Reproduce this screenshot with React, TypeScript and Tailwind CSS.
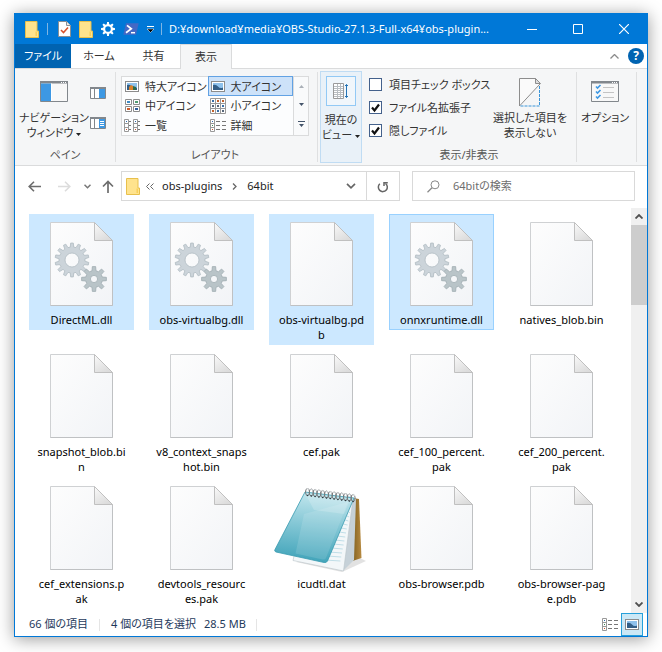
import React from 'react';

interface FileItem {
  name: string;
  kind: 'dll' | 'blank' | 'notepad';
  selected?: boolean;
  focused?: boolean;
}

const FILES: FileItem[] = [
  { name: 'DirectML.dll', kind: 'dll', selected: true },
  { name: 'obs-virtualbg.dll', kind: 'dll', selected: true },
  { name: 'obs-virtualbg.pd\nb', kind: 'blank', selected: true },
  { name: 'onnxruntime.dll', kind: 'dll', selected: true, focused: true },
  { name: 'natives_blob.bin', kind: 'blank' },
  { name: 'snapshot_blob.bi\nn', kind: 'blank' },
  { name: 'v8_context_snaps\nhot.bin', kind: 'blank' },
  { name: 'cef.pak', kind: 'blank' },
  { name: 'cef_100_percent.\npak', kind: 'blank' },
  { name: 'cef_200_percent.\npak', kind: 'blank' },
  { name: 'cef_extensions.p\nak', kind: 'blank' },
  { name: 'devtools_resourc\nes.pak', kind: 'blank' },
  { name: 'icudtl.dat', kind: 'notepad' },
  { name: 'obs-browser.pdb', kind: 'blank' },
  { name: 'obs-browser-pag\ne.pdb', kind: 'blank' },
];

function gearPath(cx: number, cy: number, outer: number, root: number, hole: number, teeth: number) {
  const step = (Math.PI * 2) / teeth;
  const points: string[] = [];
  for (let i = 0; i < teeth; i++) {
    const a = i * step - Math.PI / 2;
    const corners: [number, number][] = [
      [root, -0.3],
      [outer, -0.17],
      [outer, 0.17],
      [root, 0.3],
    ];
    corners.forEach(([r, t]) => {
      points.push(`${(cx + r * Math.cos(a + t * step)).toFixed(2)} ${(cy + r * Math.sin(a + t * step)).toFixed(2)}`);
    });
  }
  return `M${points.join('L')}ZM${cx - hole} ${cy}a${hole} ${hole} 0 1 0 ${hole * 2} 0a${hole} ${hole} 0 1 0 ${-hole * 2} 0Z`;
}

const BIG_GEAR = gearPath(22, 38, 17, 13, 7, 14);
const SMALL_GEAR = gearPath(44, 57, 12.5, 8.5, 3.6, 8);
const TITLE_GEAR = gearPath(7, 7, 7, 5, 2.8, 8);

const Folder = () => (
  <svg width="14" height="17" viewBox="0 0 14 17" className="shrink-0">
    <path d="M0.5 0.5h11.5v9.5h1.5v6.5H0.5z" fill="#ffe38d" stroke="#e8c04c" />
    <path d="M12 10v5h-1.5v-4.5h1.5z" fill="#f8cf5a" />
  </svg>
);

const PageCheck = () => (
  <svg width="13" height="16" viewBox="0 0 13 16" className="shrink-0">
    <path d="M0.5 0.5h8l4 4v11h-12z" fill="#fff" stroke="#8a8f94" />
    <path d="M8.5 0.5v4h4" fill="#e8e8e8" stroke="#8a8f94" />
    <path d="M3 9l2.5 2.5L10 6.5" fill="none" stroke="#d9532c" strokeWidth="1.6" />
  </svg>
);

const TitleGear = () => (
  <svg width="14" height="14" viewBox="0 0 14 14" className="shrink-0">
    <path d={TITLE_GEAR} fill="#fff" fillRule="evenodd" />
  </svg>
);

const Shell = () => (
  <svg width="16" height="12" viewBox="0 0 16 12" className="shrink-0">
    <path d="M3 0.3h12.7L13 11.7H0.3z" fill="#4468c4" />
    <path d="M4 2.3l4.3 3.5L3 9.7" fill="none" stroke="#fff" strokeWidth="1.7" />
    <path d="M8 9.7h4" stroke="#fff" strokeWidth="1.5" />
  </svg>
);

const PageIcon = ({ gears }: { gears?: boolean }) => (
  <svg width="63" height="84" viewBox="0 0 63 84">
    <defs>
      <linearGradient id="sheet" x1="0" y1="0" x2="1" y2="1">
        <stop offset="0" stopColor="#fdfdfd" />
        <stop offset="1" stopColor="#f2f4f7" />
      </linearGradient>
      <linearGradient id="fold" x1="0" y1="0" x2="0.6" y2="1">
        <stop offset="0" stopColor="#fafafa" />
        <stop offset="1" stopColor="#dcdcdc" />
      </linearGradient>
    </defs>
    <path d="M0.5 0.5h44l18 18v65h-62z" fill="url(#sheet)" stroke="#cfd1d3" />
    <path d="M62.5 18.5v65h-62" fill="none" stroke="#bfc1c3" />
    <path d="M44.5 0.5v18h18z" fill="url(#fold)" stroke="#c0c0c0" />
    {gears && (
      <g fillRule="evenodd" strokeWidth="0.8">
        <path d={BIG_GEAR} fill="#ccd4da" stroke="#b0bbc2" />
        <path d={SMALL_GEAR} fill="#b9c4c8" stroke="#a0acb1" />
      </g>
    )}
  </svg>
);

const NotepadIcon = () => (
  <svg width="96" height="88" viewBox="0 0 96 88" className="-mb-1">
    <defs>
      <linearGradient id="cover" x1="0.5" y1="0" x2="0.4" y2="1">
        <stop offset="0" stopColor="#c4e7ee" />
        <stop offset="0.45" stopColor="#86c8d6" />
        <stop offset="1" stopColor="#3fa3b9" />
      </linearGradient>
      <linearGradient id="board" x1="0" y1="0" x2="1" y2="0">
        <stop offset="0" stopColor="#80601f" />
        <stop offset="1" stopColor="#b88b42" />
      </linearGradient>
    </defs>
    <path d="M22 76l46 10 24-11-8-4z" fill="#d5d5d5" opacity="0.7" />
    <path d="M79 12l6 1 2.5 59-9 3z" fill="url(#board)" />
    <path d="M74 10l8 3-2 61-11 11z" fill="#c6d1d8" />
    <path d="M34 7l45 6-9.5 72L19 74.5z" fill="#f3f7f9" stroke="#b8c2c8" strokeWidth="0.6" />
    <g stroke="#a9d3e0" strokeWidth="0.7">
      {[0, 1, 2, 3, 4, 5, 6, 7, 8, 9, 10, 11, 12].map((i) => (
        <path key={i} d={`M${75 - i * 2} ${26 + i * 4}l${1 + i * 1.2} 1`} />
      ))}
    </g>
    <path d="M31 6l49 6-26.5 63q-1 2-3.5 1.5L2 66q-2-0.6-1-2.5z" fill="url(#cover)" stroke="#389ab0" strokeWidth="0.8" />
    <path d="M30 28l44-12-22 56q-1 2-3.5 1.5l-27-6z" fill="#fff" opacity="0.12" />
    <path d="M32 9l44 5-6 14-30-4z" fill="#fff" opacity="0.18" />
    <g fill="none" strokeWidth="1">
      {[0, 1, 2, 3, 4, 5, 6, 7, 8, 9, 10, 11, 12].map((i) => (
        <g key={i}>
          <ellipse cx={33.5 + i * 3.8} cy={6 + i * 0.5} rx="2" ry="3.5" stroke="#77797b" />
          <path d={`M${32.5 + i * 3.8} ${3 + i * 0.5}q2-1.5 3 1.5`} stroke="#d8dcde" />
          <circle cx={33.5 + i * 3.8} cy={9.5 + i * 0.5} r="0.8" fill="#2b3a40" stroke="none" />
        </g>
      ))}
    </g>
  </svg>
);

const Picture = () => (
  <g>
    <rect x="0.5" y="0.5" width="13" height="10" fill="#fff" stroke="#8c8c8c" />
    <path d="M2 2h10v7H2z" fill="#8ec1ec" />
    <path d="M2 4q3-1 5 1.5t5 1V9H2z" fill="#335e86" />
  </g>
);

const LargeIcon = () => (
  <svg width="14" height="11" viewBox="0 0 14 11" className="shrink-0">
    <Picture />
  </svg>
);

const ExtraLargeIcon = () => (
  <svg width="14" height="11" viewBox="0 0 14 11" className="shrink-0">
    <Picture />
    <path d="M4 9V6l2-2 2 1v4z" fill="#db812a" />
    <path d="M8 9V5l3 1v3z" fill="#2d6b4b" />
  </svg>
);

const MediumIcon = () => (
  <svg width="15" height="13" viewBox="0 0 15 13" className="shrink-0">
    <path d="M0.5 0.5h6v5h-6zM8.5 0.5h6v5h-6zM0.5 7.5h6v5h-6zM8.5 7.5h6v5h-6z" fill="#fff" stroke="#8c8c8c" />
    <path d="M2 2h3v2H2z" fill="#3f8ac4" />
    <path d="M10 2h3v2h-3z" fill="#4f9d72" />
    <path d="M2 9h3v2H2z" fill="#ce5b2b" />
    <path d="M10 9h3v2h-3z" fill="#2d5d9c" />
  </svg>
);

const SmallIcon = () => (
  <svg width="16" height="16" viewBox="0 0 16 16" className="shrink-0">
    <path d="M0.5 0.5h15v15h-15zM5.5 0.5v15M10.5 0.5v15M0.5 5.5h15M0.5 10.5h15" fill="#fff" stroke="#999" />
    <path d="M2 2h2v2H2zM12 7h2v2h-2zM7 12h2v2H7z" fill="#3a6ea5" />
    <path d="M7 2h2v2H7zM2 12h2v2H2zM12 2h2v2h-2z" fill="#c0602b" />
    <path d="M2 7h2v2H2zM7 7h2v2H7zM12 12h2v2h-2z" fill="#56667a" />
  </svg>
);

const ListIcon = () => (
  <svg width="16" height="13" viewBox="0 0 16 13" className="shrink-0">
    <path d="M0.5 0.5h4v12h-4zM9.5 0.5h4v12h-4zM0.5 4.5h4M0.5 8.5h4M9.5 4.5h4M9.5 8.5h4" fill="#fff" stroke="#999" />
    <path d="M2 2h1v1H2zM11 2h1v1h-1z" fill="#2f6db0" />
    <path d="M2 10h1v1H2zM11 10h1v1h-1z" fill="#c9502b" />
    <path d="M5 2.5h2M5 6.5h2M5 10.5h2M14 2.5h2M14 6.5h2M14 10.5h2" stroke="#777" />
  </svg>
);

const DetailsIcon = () => (
  <svg width="16" height="13" viewBox="0 0 16 13" className="shrink-0">
    <path d="M0.5 0.5h4v12h-4zM0.5 4.5h4M0.5 8.5h4" fill="#fff" stroke="#999" />
    <path d="M2 2h1v1H2z" fill="#2f6db0" />
    <path d="M2 6h1v1H2z" fill="#3c8b52" />
    <path d="M2 10h1v1H2z" fill="#c9502b" />
    <path d="M6 2.5h4M12 2.5h4M6 6.5h4M12 6.5h4M6 10.5h4M12 10.5h4" stroke="#777" />
  </svg>
);

const PaneFrame = () => (
  <g>
    <path d="M0.5 0.5h27v20h-27z" fill="#f8f8f8" stroke="#82878c" />
    <path d="M0 0h28v2.5H0z" fill="#82878c" />
    <path d="M21 1h1v1h-1zM23 1h1v1h-1zM25 1h1v1h-1z" fill="#fff" />
  </g>
);

const NavPaneIcon = () => (
  <svg width="28" height="21" viewBox="0 0 28 21">
    <PaneFrame />
    <path d="M1 2.5h10V20H1z" fill="#3d98e3" />
    <path d="M11 2.5h1V20h-1z" fill="#fff" />
  </svg>
);

const PreviewPaneIcon = ({ lines }: { lines?: boolean }) => (
  <svg width="16" height="12" viewBox="0 0 16 12">
    <path d="M0.5 0.5h15v11h-15z" fill="#fff" stroke="#82878c" />
    <path d="M0 0h16v2H0z" fill="#82878c" />
    <path d="M4.5 2v9" stroke="#82878c" />
    <path d="M9 2h6v9H9z" fill="#3d98e3" />
    {lines && <path d="M10 4.5h4M10 6.5h4M10 8.5h4" stroke="#fff" />}
  </svg>
);

const Caret = () => (
  <svg width="5" height="3" viewBox="0 0 5 3" className="ml-[3px] inline-block align-middle">
    <path d="M0 0h5L2.5 3z" fill="#222" />
  </svg>
);

const SortIcon = () => (
  <svg width="16" height="16" viewBox="0 0 16 16">
    <path d="M0.5 0.5h10v15h-10z" fill="#fff" stroke="#9a9a9a" />
    <path d="M1 3.5h9M1 5.5h9M1 7.5h9M1 9.5h9M1 11.5h9M1 13.5h9M4.5 1v14M7.5 1v14" stroke="#b9bec2" />
    <path d="M13.5 1.5v13M12 3l1.5-1.5L15 3M12 13l1.5 1.5L15 13" fill="none" stroke="#2473b5" />
  </svg>
);

const HideIcon = () => (
  <svg width="22" height="29" viewBox="0 0 22 29">
    <path d="M0.5 0.5h16l4.5 5.5L0.5 28z" fill="#fafafa" stroke="#8d8d8d" />
    <path d="M16.5 0.5v5h5z" fill="#ddd" stroke="#8d8d8d" />
    <path d="M20.5 8v20H1" fill="none" stroke="#3a95d8" strokeDasharray="3 1" />
  </svg>
);

const OptionsIcon = () => (
  <svg width="28" height="21" viewBox="0 0 28 21">
    <PaneFrame />
    <path d="M5 5.5l1.5 1.5L9.5 4M5 10.5L6.5 12l3-3M5 15.5L6.5 17l3-3" fill="none" stroke="#3d98e3" strokeWidth="1.6" />
    <path d="M12 6.5h11M12 11.5h11M12 16.5h11" stroke="#c4c4c4" />
  </svg>
);

const VIEWS = [
  { label: '特大アイコン', Icon: ExtraLargeIcon },
  { label: '大アイコン', Icon: LargeIcon, active: true },
  { label: '中アイコン', Icon: MediumIcon },
  { label: '小アイコン', Icon: SmallIcon },
  { label: '一覧', Icon: ListIcon },
  { label: '詳細', Icon: DetailsIcon },
];

const CHECKS = [
  { id: 'item-checks', label: '項目チェック ボックス', checked: false },
  { id: 'extensions', label: 'ファイル名拡張子', checked: true },
  { id: 'hidden-files', label: '隠しファイル', checked: true },
];

const TitleBar = () => (
  <header className="flex h-[30px] items-center bg-[#0078d7] pl-[10px] text-white">
    <Folder />
    <span className="mx-[8px] h-3 w-px bg-[#7fb5e3]" />
    <div className="ml-[2px] flex items-center gap-[8px]">
      <PageCheck />
      <Folder />
      <TitleGear />
      <Shell />
      <button type="button" aria-label="Customize toolbar">
        <svg width="7" height="7" viewBox="0 0 7 7">
          <path d="M0 0.5h7" stroke="#fff" />
          <path d="M0 3h7L3.5 6.5z" fill="#000" stroke="#fff" strokeWidth="0.5" />
        </svg>
      </button>
    </div>
    <span className="mx-[7px] h-3 w-px bg-[#7fb5e3]" />
    <h1 className="min-w-0 flex-1 truncate">D:¥download¥media¥OBS-Studio-27.1.3-Full-x64¥obs-plugin...</h1>
    <div className="flex h-full shrink-0">
      <button type="button" aria-label="Minimize" className="flex w-[46px] items-center justify-center">
        <svg width="10" height="10" viewBox="0 0 10 10"><path d="M0 5.5h10" stroke="#fff" /></svg>
      </button>
      <button type="button" aria-label="Maximize" className="flex w-[46px] items-center justify-center">
        <svg width="10" height="10" viewBox="0 0 10 10"><path d="M0.5 0.5h9v9h-9z" fill="none" stroke="#fff" /></svg>
      </button>
      <button type="button" aria-label="Close" className="flex w-[46px] items-center justify-center">
        <svg width="10" height="10" viewBox="0 0 10 10"><path d="M0 0l10 10M10 0L0 10" stroke="#fff" strokeWidth="1.2" /></svg>
      </button>
    </div>
  </header>
);

const Tabs = () => (
  <nav className="flex h-[25px] border-b border-[#dadbdc] bg-white text-[#333]">
    <button type="button" className="w-[56px] bg-[#0063b1] text-white">ファイル</button>
    <button type="button" className="w-[56px]">ホーム</button>
    <button type="button" className="w-[53px]">共有</button>
    <button type="button" className="-mb-px w-[52px] border-x border-t border-[#dadbdc] bg-[#f5f6f7]">表示</button>
    <div className="ml-auto flex items-center gap-[9px] pr-[3px]">
      <button type="button" aria-label="Collapse ribbon">
        <svg width="9" height="5" viewBox="0 0 9 5"><path d="M0.5 4.5l4-4 4 4" fill="none" stroke="#8a8a8a" strokeWidth="1.3" /></svg>
      </button>
      <button type="button" aria-label="Help" className="flex h-4 w-4 items-center justify-center rounded-full bg-[#0063b1] text-xs font-bold text-white">
        ?
      </button>
    </div>
  </nav>
);

const GroupLabel = ({ children }: { children: React.ReactNode }) => (
  <div className="mt-auto text-center text-[#555]">{children}</div>
);

const Ribbon = () => (
  <section className="flex h-[97px] border-b border-[#dadbdc] bg-[#f5f6f7] py-[2px] leading-[15px] text-[#333]">
    <div className="my-px flex w-[101px] shrink-0 flex-col border-r border-[#dfe0e1]">
      <div className="flex pl-[3px]">
        <button type="button" className="flex w-[72px] flex-col items-center gap-[8px] pt-[9px]">
          <NavPaneIcon />
          <span className="whitespace-nowrap">
            ナビゲーション<br />ウィンドウ<Caret />
          </span>
        </button>
        <div className="flex flex-col gap-[18px] pt-[15px]">
          <button type="button" aria-label="Preview pane"><PreviewPaneIcon /></button>
          <button type="button" aria-label="Details pane"><PreviewPaneIcon lines /></button>
        </div>
      </div>
      <GroupLabel>ペイン</GroupLabel>
    </div>

    <div className="my-px flex w-[202px] shrink-0 flex-col border-r border-[#dfe0e1] pr-[8px] pl-[5px]">
      <div className="mt-[4px] flex h-[60px] border border-[#dadbdc] bg-[#fcfdfe]">
        <div className="grid flex-1 grid-cols-2 grid-rows-3">
          {VIEWS.map(({ label, Icon, active }) => (
            <button
              key={label}
              type="button"
              className={`flex items-center gap-[5px] border px-px whitespace-nowrap ${active ? '-mt-px border-[#62a2e4] bg-[#cde2f9]' : 'border-transparent'}`}
            >
              <span className="flex w-4 shrink-0 justify-center"><Icon /></span>
              {label}
            </button>
          ))}
        </div>
        <div className="flex w-[15px] flex-col items-center justify-around border-l border-[#dadbdc] bg-[#f9fafb]">
          <button type="button" aria-label="Previous row"><svg width="5" height="3" viewBox="0 0 5 3"><path d="M0 3h5L2.5 0z" fill="#aab0b8" /></svg></button>
          <button type="button" aria-label="Next row"><svg width="5" height="3" viewBox="0 0 5 3"><path d="M0 0h5L2.5 3z" fill="#44546a" /></svg></button>
          <button type="button" aria-label="More layouts"><svg width="7" height="6" viewBox="0 0 7 6"><path d="M0 0h7v1H0zM1 3h5L3.5 6z" fill="#44546a" /></svg></button>
        </div>
      </div>
      <GroupLabel>レイアウト</GroupLabel>
    </div>

    <button type="button" className="ml-[2px] flex w-[42px] shrink-0 flex-col items-center gap-[6px] border border-[#c0dcf3] bg-[#e9f1f8] pt-[4px]">
      <span className="flex h-[30px] w-[30px] items-center justify-center border border-[#92c9f5] bg-[#f0f6fb]"><SortIcon /></span>
      <span className="whitespace-nowrap">
        現在の<br />ビュー<Caret />
      </span>
    </button>

    <div className="my-px flex w-[215px] shrink-0 flex-col border-r border-[#dfe0e1]">
      <div className="flex pl-[7px]">
        <div className="flex flex-col gap-[8px] pt-[5px]">
          {CHECKS.map((check) => (
            <label key={check.id} htmlFor={check.id} className="flex items-center gap-[7px] whitespace-nowrap">
              <span className="grid h-[13px] w-[13px]">
                <input
                  id={check.id}
                  type="checkbox"
                  defaultChecked={check.checked}
                  className="peer col-start-1 row-start-1 h-[13px] w-[13px] appearance-none border border-[#44618c] bg-white"
                />
                <svg viewBox="0 0 13 13" className="pointer-events-none invisible col-start-1 row-start-1 peer-checked:visible">
                  <path d="M3 6.5l2.5 3 4.5-6" fill="none" stroke="#111" strokeWidth="2.2" />
                </svg>
              </span>
              {check.label}
            </label>
          ))}
        </div>
        <button type="button" className="mr-[8px] ml-auto flex w-[76px] flex-col items-center gap-[3px] pt-[6px]">
          <HideIcon />
          <span className="whitespace-nowrap">
            選択した項目を<br />表示しない
          </span>
        </button>
      </div>
      <GroupLabel>表示/非表示</GroupLabel>
    </div>

    <div className="my-px w-[60px] shrink-0 border-r border-[#dfe0e1] pr-[3px]">
      <button type="button" className="flex w-full flex-col items-center gap-[8px] pt-[9px]">
        <OptionsIcon />
        <span className="whitespace-nowrap">オプション</span>
      </button>
    </div>
  </section>
);

const AddressBar = () => (
  <div className="flex h-[42px] items-center bg-white pr-[12px] pb-[2px] pl-[13px] text-[#222]">
    <div className="flex w-[93px] shrink-0 items-center">
      <button type="button" aria-label="Back">
        <svg width="13" height="11" viewBox="0 0 13 11"><path d="M13 5.5H1M6 0.8L1.2 5.5 6 10.2" fill="none" stroke="#6d6d6d" strokeWidth="1.6" /></svg>
      </button>
      <button type="button" aria-label="Forward" className="ml-[17px]">
        <svg width="13" height="11" viewBox="0 0 13 11"><path d="M0 5.5h12M7 0.8l4.8 4.7L7 10.2" fill="none" stroke="#dcdcdc" strokeWidth="1.6" /></svg>
      </button>
      <button type="button" aria-label="Recent locations" className="ml-[13px]">
        <svg width="7" height="5" viewBox="0 0 7 5"><path d="M0.5 0.8l3 3 3-3" fill="none" stroke="#777" strokeWidth="1.5" /></svg>
      </button>
      <button type="button" aria-label="Up" className="ml-[11px]">
        <svg width="12" height="13" viewBox="0 0 12 13"><path d="M6 13V1.5M1 6.5l5-5 5 5" fill="none" stroke="#6d6d6d" strokeWidth="1.7" /></svg>
      </button>
    </div>
    <div className="flex h-[30px] flex-[273_1_0] items-center border border-[#d9d9d9] pl-[4px]">
      <Folder />
      <svg width="8" height="7" viewBox="0 0 8 7" className="ml-[6px]"><path d="M3.5 0.5l-3 3 3 3M7.5 0.5l-3 3 3 3" fill="none" stroke="#666" /></svg>
      <button type="button" className="ml-[8px]">obs-plugins</button>
      <svg width="5" height="7" viewBox="0 0 5 7" className="mx-[10px]"><path d="M1 0.5l3 3-3 3" fill="none" stroke="#666" strokeWidth="1.3" /></svg>
      <button type="button">64bit</button>
      <button type="button" aria-label="Previous locations" className="ml-auto px-[10px]">
        <svg width="10" height="6" viewBox="0 0 10 6"><path d="M1 0.8l4 4 4-4" fill="none" stroke="#666" strokeWidth="1.7" /></svg>
      </button>
      <button type="button" aria-label="Refresh" className="flex h-full w-[33px] items-center justify-center border-l border-[#d9d9d9]">
        <svg width="12" height="13" viewBox="0 0 12 13" fill="none" stroke="#666" strokeWidth="1.5">
          <path d="M2.8 3.8A4.5 4.5 0 1 0 8.5 3.5" />
          <path d="M7 6V2.7h3.8" />
        </svg>
      </button>
    </div>
    <label htmlFor="search" className="ml-[12px] flex h-[30px] flex-[207_1_0] items-center gap-[13px] border border-[#d9d9d9] pl-[14px]">
      <svg width="13" height="13" viewBox="0 0 13 13" className="shrink-0"><circle cx="8" cy="4.8" r="4" fill="none" stroke="#888" /><path d="M5 7.7L0.5 12.3" stroke="#888" strokeWidth="1.3" /></svg>
      <input id="search" type="text" placeholder="64bitの検索" className="min-w-0 flex-1 bg-transparent outline-none placeholder:text-[#6d6d6d]" />
    </label>
  </div>
);

const FileTile = ({ file }: { file: FileItem }) => {
  const state = file.focused ? 'border-[#99d1ff] bg-[#cce8ff]' : file.selected ? 'border-[#cce8ff] bg-[#cce8ff]' : 'border-transparent';
  return (
    <button type="button" className={`flex flex-col items-center gap-[6px] self-start border pt-[7px] pb-[2px] ${state}`}>
      {file.kind === 'notepad' ? <NotepadIcon /> : <PageIcon gears={file.kind === 'dll'} />}
      <span className="whitespace-pre leading-[15px] text-black">{file.name}</span>
    </button>
  );
};

const StatusBar = () => (
  <footer className="flex h-[23px] shrink-0 items-center bg-white pr-[4px] pl-[14px] text-[#1e395b]">
    <span>66 個の項目</span>
    <span className="mx-[11px] h-3 w-px bg-[#e5e5e5]" />
    <span>4 個の項目を選択</span>
    <span className="ml-[8px]">28.5 MB</span>
    <span className="mx-[10px] h-3 w-px bg-[#e5e5e5]" />
    <div className="ml-auto flex h-full items-center gap-[3px]">
      <button type="button" aria-label="Details view"><DetailsIcon /></button>
      <button type="button" aria-label="Large icons view" className="flex h-full w-[22px] items-center justify-center border border-[#26a0da] bg-[#cbe8f6]">
        <LargeIcon />
      </button>
    </div>
  </footer>
);

export default function App() {
  return (
    <div className="flex min-h-screen flex-col bg-white px-[14px] pt-[13px] pb-[15px] font-['Noto_Sans','Noto_Sans_CJK_JP',sans-serif] text-[11px] [font-feature-settings:'palt']">
      <div className="flex flex-1 flex-col border border-[#0078d7] bg-white shadow-[0_2px_16px_rgba(0,0,0,0.4)]">
        <TitleBar />
        <Tabs />
        <Ribbon />
        <AddressBar />
        <main className="flex flex-1">
          <div className="grid flex-1 grid-cols-[repeat(auto-fill,105px)] content-start gap-x-[15px] gap-y-px pt-[6px] pl-[14px]">
            {FILES.map((file) => (
              <FileTile key={file.name} file={file} />
            ))}
          </div>
          <div className="flex w-[16px] flex-col items-center bg-[#f0f0f0]">
            <button type="button" aria-label="Scroll up" className="flex h-[17px] w-full items-center justify-center">
              <svg width="8" height="5" viewBox="0 0 8 5"><path d="M0.5 4.5l3.5-3.5 3.5 3.5" fill="none" stroke="#505050" strokeWidth="1.8" /></svg>
            </button>
            <div className="h-[80px] w-full bg-[#cdcdcd]" />
            <button type="button" aria-label="Scroll down" className="mt-auto flex h-[17px] w-full items-center justify-center">
              <svg width="8" height="5" viewBox="0 0 8 5"><path d="M0.5 0.5L4 4l3.5-3.5" fill="none" stroke="#505050" strokeWidth="1.8" /></svg>
            </button>
          </div>
        </main>
        <StatusBar />
      </div>
    </div>
  );
}
